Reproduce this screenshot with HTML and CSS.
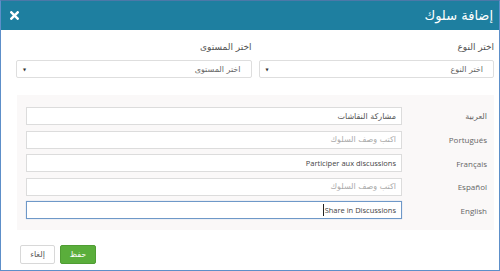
FILE: index.html
```html
<!DOCTYPE html>
<html lang="ar" dir="rtl">
<head>
  <meta charset="UTF-8" />
  <title>إضافة سلوك</title>
  <link rel="stylesheet" href="styles.css">
</head>
<body>
  <div class="modal">
    <div class="modal-header">
      <span class="modal-title">إضافة سلوك</span>
      <span class="close-btn">
        <svg width="9" height="9" viewBox="0 0 9 9">
          <path d="M1.3 1.3 L7.7 7.7 M7.7 1.3 L1.3 7.7" stroke="#fff" stroke-width="2.4" stroke-linecap="square" />
        </svg>
      </span>
    </div>

    <div class="modal-body">
      <div class="filters">
        <div class="field">
          <label>اختر النوع</label>
          <div class="select">اختر النوع<span class="arrow">▼</span></div>
        </div>
        <div class="field">
          <label>اختر المستوى</label>
          <div class="select">اختر المستوى<span class="arrow">▼</span></div>
        </div>
      </div>

      <div class="translations">
        <div class="tr-row">
          <label>العربية</label>
          <div class="text-input">مشاركة النقاشات</div>
        </div>
        <div class="tr-row">
          <label class="latin">Portugués</label>
          <div class="text-input placeholder">اكتب وصف السلوك</div>
        </div>
        <div class="tr-row">
          <label class="latin">Français</label>
          <div class="text-input latin">Participer aux discussions</div>
        </div>
        <div class="tr-row">
          <label class="latin">Español</label>
          <div class="text-input placeholder">اكتب وصف السلوك</div>
        </div>
        <div class="tr-row">
          <label class="latin">English</label>
          <div class="text-input latin focused"><span>Share in Discussions</span><span class="caret"></span></div>
        </div>
      </div>

      <div class="modal-footer">
        <button class="btn btn-save">حفظ</button>
        <button class="btn btn-cancel">إلغاء</button>
      </div>
    </div>
  </div>
</body>
</html>
```

FILE: styles.css
```css
* {
  box-sizing: border-box;
}

body {
  margin: 0;
  font-family: "DejaVu Sans", sans-serif;
  background: #fff;
}

.modal {
  height: 271px;
  border: 1px solid #5d8fc9;
  border-top-color: #4c78a8;
  background: #fff;
}

.modal-header {
  height: 29px;
  background: #1e7fa0;
  color: #fff;
  display: flex;
  align-items: center;
  justify-content: space-between;
  padding: 0 6px 0 9px;
}

.modal-title {
  font-size: 13px;
}

.close-btn {
  display: flex;
}

.modal-body {
  padding: 10px 5px 0 15px;
}

.filters {
  display: grid;
  grid-template-columns: 1fr 1fr;
  gap: 7px;
}

.field label {
  display: block;
  font-size: 9px;
  line-height: 14px;
  color: #555;
  margin-bottom: 6px;
}

.select {
  height: 18px;
  border: 1px solid #dedede;
  border-radius: 2px;
  font-size: 8px;
  color: #666;
  display: flex;
  align-items: center;
  justify-content: space-between;
  padding: 0 10px 0 6px;
}

.arrow {
  font-size: 4px;
  color: #333;
}

.translations {
  margin-top: 17px;
  margin-left: 1px;
  background: #faf8f8;
  padding: 12px 0 11px 9px;
  display: grid;
  gap: 5.5px;
}

.tr-row {
  display: grid;
  grid-template-columns: 92px 1fr;
  align-items: center;
}

.tr-row label {
  font-size: 8px;
  color: #666;
  padding-right: 7px;
}

.latin {
  font-family: "Open Sans", "Liberation Sans", sans-serif;
}

.text-input {
  height: 18px;
  background: #fff;
  border: 1px solid #dcdcdc;
  font-size: 8px;
  color: #555;
  display: flex;
  align-items: center;
  padding: 0 5px;
}

.text-input.latin {
  font-size: 7.5px;
  color: #444;
}

.text-input.placeholder {
  color: #aaa;
}

.text-input.focused {
  border-color: #6e98c8;
  box-shadow: 0 0 1px #a9c3e0;
}

.caret {
  display: inline-block;
  width: 1px;
  height: 12px;
  background: #222;
  margin-right: 1px;
}

.modal-footer {
  display: flex;
  justify-content: flex-end;
  gap: 5px;
  margin-top: 15px;
  padding-left: 4px;
}

.btn {
  height: 19px;
  width: 36px;
  font-family: "DejaVu Sans", sans-serif;
  font-size: 8px;
  border-radius: 2px;
  padding: 0;
}

.btn-save {
  background: #5aae3b;
  border: 1px solid #4f9d33;
  color: #fff;
}

.btn-cancel {
  background: #fff;
  border: 1px solid #d8d8d8;
  color: #555;
  width: 35px;
}
```
